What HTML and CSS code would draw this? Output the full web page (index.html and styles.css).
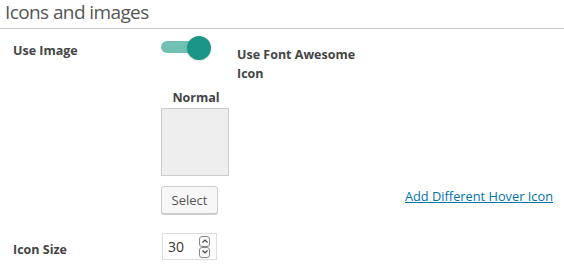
FILE: index.html
```html
<!DOCTYPE html>
<html>
<head>
<meta charset="utf-8">
<link rel="stylesheet" href="styles.css">
</head>
<body>
<h2 class="section-title">Icons and images</h2>
<div class="row row-image">
  <div class="row-label">Use Image</div>
  <div class="toggle">
    <span class="toggle-track"></span>
    <span class="toggle-knob"></span>
  </div>
  <div class="fa-label">Use Font Awesome Icon</div>
</div>
<div class="row row-normal">
  <div class="row-label"></div>
  <div class="image-col">
    <div class="image-title">Normal</div>
    <div class="image-box"></div>
    <button class="select-btn">Select</button>
  </div>
  <div class="hover-col">
    <a class="hover-link" href="#">Add Different Hover Icon</a>
  </div>
</div>
<div class="row row-size">
  <div class="row-label size-label">Icon Size</div>
  <div class="num-input">
    <span class="num-value">30</span>
    <span class="spinner">
      <span class="spin-btn"><svg width="8" height="6" viewBox="0 0 8 6"><path d="M1.5 4.5 L4 2 L6.5 4.5" fill="none" stroke="#444" stroke-width="1.2"/></svg></span>
      <span class="spin-btn"><svg width="8" height="6" viewBox="0 0 8 6"><path d="M1.5 1.5 L4 4 L6.5 1.5" fill="none" stroke="#444" stroke-width="1.2"/></svg></span>
    </span>
  </div>
</div>
</body>
</html>
```
FILE: styles.css
```css
html, body {
  margin: 0;
  padding: 0;
  background: #fff;
}
body {
  font-family: "Open Sans", "DejaVu Sans", sans-serif;
  color: #444;
  font-size: 13px;
}
.section-title {
  margin: 0;
  height: 29px;
  box-sizing: border-box;
  padding: 0 0 0 5px;
  font-size: 19px;
  letter-spacing: -0.6px;
  line-height: 25px;
  font-weight: 400;
  color: #555;
  border-bottom: 1px solid #ccc;
}
.row {
  display: flex;
  align-items: flex-start;
}
.row-label {
  width: 148px;
  padding-left: 13px;
  flex: none;
  font-weight: 700;
  font-size: 12.5px;
  line-height: 20px;
  color: #444;
}
.row-image {
  padding-top: 7px;
  height: 47px;
}
.row-image .row-label {
  padding-top: 5px;
}
.toggle {
  position: relative;
  width: 50px;
  height: 24px;
  flex: none;
}
.toggle-track {
  position: absolute;
  left: 0;
  top: 5px;
  width: 40px;
  height: 12px;
  border-radius: 6px;
  background: #71c0b4;
}
.toggle-knob {
  position: absolute;
  left: 26px;
  top: 0;
  width: 24px;
  height: 24px;
  border-radius: 50%;
  background: #1b9585;
  box-shadow: 0 1px 2px rgba(0,0,0,0.15);
}
.fa-label {
  margin-left: 26px;
  width: 130px;
  padding-top: 9px;
  font-weight: 700;
  font-size: 12.5px;
  line-height: 19px;
}
.row-normal {
  align-items: flex-end;
  margin-top: 2px;
}
.image-col {
  width: 76px;
  flex: none;
  display: flex;
  flex-direction: column;
  align-items: flex-start;
}
.image-title {
  width: 68px;
  text-align: center;
  font-weight: 700;
  font-size: 12.5px;
  line-height: 20px;
  padding-top: 3px;
  padding-left: 1px;
}
.image-box {
  margin-top: 0;
  width: 68px;
  height: 68px;
  box-sizing: border-box;
  background: #eee;
  border: 1px solid #ccc;
}
.select-btn {
  margin-top: 10px;
  width: 57px;
  height: 28px;
  box-sizing: border-box;
  padding: 0;
  border: 1px solid #ccc;
  border-radius: 3px;
  background: #f7f7f7;
  box-shadow: 0 1px 0 #ccc;
  font-family: "Open Sans", "DejaVu Sans", sans-serif;
  font-size: 13px;
  color: #555;
}
.hover-col {
  flex: 1;
  text-align: right;
  padding-right: 11px;
  padding-bottom: 8px;
}
.hover-link {
  color: #0073aa;
  text-decoration: underline;
  font-size: 12.8px;
  line-height: 20px;
}
.row-size {
  padding-top: 19px;
  align-items: flex-start;
}
.size-label {
  padding-top: 7px;
}
.num-input {
  margin-left: 1px;
  width: 55px;
  height: 27px;
  box-sizing: border-box;
  border: 1px solid #ddd;
  display: flex;
  align-items: center;
  padding-left: 5px;
}
.num-value {
  flex: 1;
  font-size: 14px;
  color: #333;
}
.spinner {
  display: flex;
  flex-direction: column;
  margin-right: 6px;
}
.spin-btn {
  width: 11px;
  height: 11px;
  box-sizing: border-box;
  border: 1px solid #888;
  border-radius: 3px;
  display: flex;
  align-items: center;
  justify-content: center;
  background: #fafafa;
}
```
